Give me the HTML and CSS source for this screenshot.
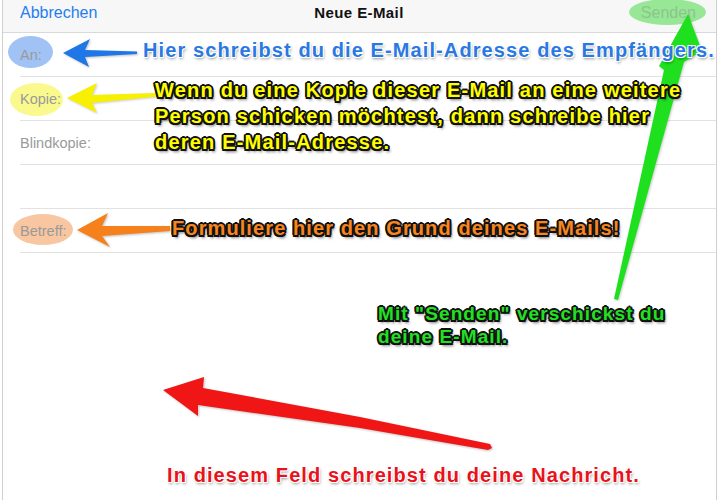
FILE: index.html
```html
<!DOCTYPE html>
<html lang="de">
<head>
<meta charset="utf-8">
<title>Neue E-Mail</title>
<link rel="stylesheet" href="styles.css">
</head>
<body>
<div class="screen">
  <div class="edge-left"></div>
  <main class="sheet">
    <header class="navbar">
      <span class="nav-cancel">Abbrechen</span>
      <span class="nav-title">Neue E-Mail</span>
      <span class="nav-send"><span class="hl hl-green"></span><span class="nav-send-text">Senden</span></span>
    </header>
    <div class="field"><span class="label"><span class="hl hl-blue"></span><span class="label-text">An:</span></span></div>
    <div class="field"><span class="label"><span class="hl hl-yellow"></span><span class="label-text">Kopie:</span></span></div>
    <div class="field"><span class="label"><span class="label-text">Blindkopie:</span></span></div>
    <div class="field"></div>
    <div class="field"><span class="label"><span class="hl hl-orange"></span><span class="label-text">Betreff:</span></span></div>
    <div class="message"></div>
  </main>
  <div class="edge-right"></div>

  <div class="annotations">
    <svg class="arrows" width="720" height="500" viewBox="0 0 720 500">
      <polygon class="a-blue" points="63,53 90,39 85,50 137,51.5 137,54 85,57 89,67"/>
      <polygon class="a-yellow" points="67,98 97,83 92,95 157,93 157,96.5 92,103 97,113"/>
      <polygon class="a-orange" points="77,230 108,213 102,226 170,226 170,231 102,236 110,247"/>
      <polygon class="a-green" points="688,14 702,51 684,62 618,300 614,299 664,70 659,66"/>
      <polygon class="a-red" points="163,390 204,377 203,388 360,417 490,444 492,448 488,450 360,428 198,405 198,416"/>
    </svg>
    <p class="note note-blue">Hier schreibst du die E-Mail-Adresse des Empfängers.</p>
    <p class="note note-yellow">Wenn du eine Kopie dieser E-Mail an eine weitere<br>Person schicken möchtest, dann schreibe hier<br>deren E-Mail-Adresse.</p>
    <p class="note note-orange">Formuliere hier den Grund deines E-Mails!</p>
    <p class="note note-green">Mit "Senden" verschickst du<br>deine E-Mail.</p>
    <p class="note note-red">In diesem Feld schreibst du deine Nachricht.</p>
  </div>
</div>
</body>
</html>
```
FILE: styles.css
```css
* { box-sizing: border-box; }

html, body {
  margin: 0;
  padding: 0;
  background: #ffffff;
}

body {
  font-family: "Liberation Sans", Arial, Helvetica, sans-serif;
}

.screen {
  position: relative;
  width: 720px;
  height: 500px;
  overflow: hidden;
  display: flex;
  background: #ffffff;
}

.edge-left {
  width: 2px;
  flex: none;
  background: #ffffff;
}

.edge-right {
  width: 3px;
  flex: none;
  background: #ffffff;
}

.sheet {
  flex: 1;
  display: flex;
  flex-direction: column;
  border-left: 1px solid #cfcfcf;
  border-right: 1px solid #cfcfcf;
  background: #ffffff;
}

.navbar {
  height: 33px;
  flex: none;
  display: grid;
  grid-template-columns: 1fr auto 1fr;
  align-items: start;
  padding: 3px 20px 0 17px;
  background: #f7f7f7;
  border-bottom: 1px solid #d9d9d9;
  line-height: 19px;
  font-size: 16px;
}

.nav-cancel {
  color: #1f7ef0;
  justify-self: start;
}

.nav-title {
  color: #111111;
  font-weight: bold;
  font-size: 15px;
  letter-spacing: 0.4px;
  padding-left: 2px;
}

.nav-send {
  justify-self: end;
  position: relative;
  isolation: isolate;
}

.nav-send-text {
  color: #8cc58c;
  position: relative;
  z-index: 1;
}

.field {
  height: 44px;
  flex: none;
  margin-left: 17px;
  border-bottom: 1px solid #e2e2e2;
  display: flex;
  align-items: center;
}

.label {
  position: relative;
  isolation: isolate;
  font-size: 14.5px;
  color: #9a9a9a;
  padding-top: 1px;
}

.label-text {
  position: relative;
  z-index: 1;
}

.hl {
  position: absolute;
  border-radius: 50%;
  z-index: 0;
}

.hl-blue {
  background: #a1c2f4;
  left: -12px;
  top: -10px;
  width: 45px;
  height: 32px;
}

.hl-yellow {
  background: #f9f98e;
  left: -10px;
  top: -7px;
  width: 53px;
  height: 33px;
}

.hl-orange {
  background: #f8c6a0;
  left: -7px;
  top: -8px;
  width: 60px;
  height: 31px;
}

.hl-green {
  background: #97e797;
  left: -12px;
  top: -4px;
  width: 77px;
  height: 26px;
}

.message {
  flex: 1;
}

/* annotation layer drawn over the screenshot */
.annotations {
  position: absolute;
  inset: 0;
  pointer-events: none;
}

.arrows {
  position: absolute;
  left: 0;
  top: 0;
}

.a-blue { fill: #1f76e6; filter: drop-shadow(1px 1px 1px rgba(0,0,0,0.25)); }
.a-yellow { fill: #f7f000; filter: drop-shadow(1px 1px 1px rgba(0,0,0,0.2)); }
.a-orange { fill: #f5801c; filter: drop-shadow(1px 1px 1px rgba(0,0,0,0.25)); }
.a-green { fill: #1fe01f; filter: drop-shadow(1px 1px 1px rgba(0,0,0,0.2)); }
.a-red { fill: #f01616; filter: drop-shadow(1px 1px 1px rgba(0,0,0,0.25)); }

.note {
  position: absolute;
  margin: 0;
  font-weight: bold;
  font-size: 20px;
  line-height: 24px;
  letter-spacing: 1.1px;
  white-space: nowrap;
}

.note-blue {
  left: 143px;
  top: 38px;
  color: #2a79e2;
  text-shadow: -1px -1px 0 #fff, 1px -1px 0 #fff, -1px 1px 0 #fff, 1px 1px 0 #fff,
               1px 2px 3px rgba(0,0,0,0.45);
}

.note-red {
  left: 167px;
  top: 463px;
  color: #e8121b;
  text-shadow: -1px -1px 0 #fff, 1px -1px 0 #fff, -1px 1px 0 #fff, 1px 1px 0 #fff,
               1px 2px 3px rgba(0,0,0,0.45);
}

.note-yellow,
.note-orange,
.note-green {
  text-shadow: -1.5px -1.5px 0 #111, 1.5px -1.5px 0 #111, -1.5px 1.5px 0 #111, 1.5px 1.5px 0 #111,
               0 -2px 0 #111, 0 2px 0 #111, -2px 0 0 #111, 2px 0 0 #111,
               2px 3px 3px rgba(0,0,0,0.6);
}

.note-yellow {
  left: 155px;
  top: 77px;
  line-height: 26px;
  letter-spacing: 1.2px;
  color: #ffff00;
}

.note-orange {
  left: 172px;
  top: 216px;
  color: #f7861f;
}

.note-green {
  left: 378px;
  top: 302px;
  font-size: 19px;
  line-height: 23px;
  color: #22e022;
}
```
